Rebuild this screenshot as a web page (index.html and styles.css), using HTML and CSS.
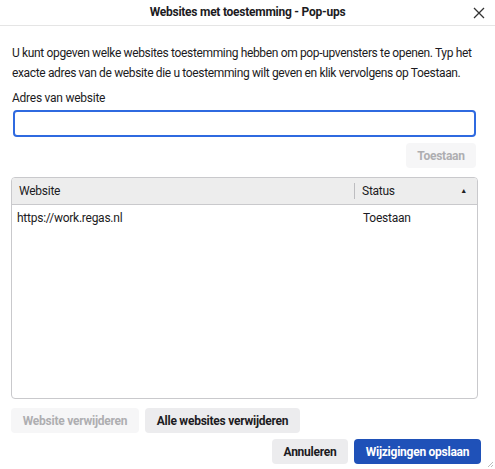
FILE: index.html
```html
<!DOCTYPE html>
<html lang="nl">
<head>
<meta charset="utf-8">
<title>Websites met toestemming - Pop-ups</title>
<link rel="stylesheet" href="styles.css">
</head>
<body>
<div class="dialog">
  <header class="titlebar">
    <span class="title">Websites met toestemming - Pop-ups</span>
    <button class="close" aria-label="Sluiten">
      <svg width="12" height="12" viewBox="0 0 12 12"><path d="M1 1 L11 11 M11 1 L1 11" stroke="#333" stroke-width="1.3" fill="none"/></svg>
    </button>
  </header>
  <main class="content">
    <p class="intro">U kunt opgeven welke websites toestemming hebben om pop-upvensters te openen. Typ het<br>exacte adres van de website die u toestemming wilt geven en klik vervolgens op Toestaan.</p>
    <label class="label" for="url">Adres van website</label>
    <input id="url" class="url-input" type="text">
    <div class="allow-row">
      <button class="btn disabled">Toestaan</button>
    </div>
    <div class="table">
      <div class="thead">
        <div class="th th-site">Website</div>
        <div class="th th-status">Status<span class="sort">&#9650;</span></div>
      </div>
      <div class="tbody">
        <div class="tr">
          <div class="td td-site">https://work.regas.nl</div>
          <div class="td td-status">Toestaan</div>
        </div>
      </div>
    </div>
    <div class="remove-row">
      <button class="btn disabled">Website verwijderen</button>
      <button class="btn">Alle websites verwijderen</button>
    </div>
    <div class="footer">
      <button class="btn">Annuleren</button>
      <button class="btn primary">Wijzigingen opslaan</button>
    </div>
  </main>
  <svg class="grip" width="8" height="8" viewBox="0 0 8 8"><path d="M7 2 L2 7 M7 5 L5 7" stroke="#aaa" stroke-width="0.8"/></svg>
</div>
</body>
</html>
```
FILE: styles.css
```css
* { box-sizing: border-box; }
html, body { margin: 0; padding: 0; background: #fff; }
body {
  font-family: Roboto, "Liberation Sans", Arial, sans-serif;
  font-size: 12px;
  letter-spacing: -0.25px;
  color: #1c1b22;
}
.dialog {
  position: relative;
  width: 495px;
  height: 469px;
  overflow: hidden;
}
.titlebar {
  position: relative;
  height: 26px;
  border-bottom: 1px solid #e5e5e5;
  display: flex;
  align-items: center;
  justify-content: center;
}
.title {
  font-weight: bold;
  font-size: 12px;
  margin-top: -1px;
}
.close {
  position: absolute;
  right: 9px;
  top: 6px;
  width: 14px;
  height: 14px;
  padding: 0;
  border: 0;
  background: none;
  display: flex;
  align-items: center;
  justify-content: center;
}
.content {
  padding: 17px 14px 0 11px;
}
.intro {
  margin: 0 0 0 1px;
  line-height: 20px;
  letter-spacing: -0.35px;
  white-space: nowrap;
}
.label {
  display: block;
  margin: 7px 0 0 1px;
  line-height: 16px;
}
.url-input {
  display: block;
  margin: 4px 0 0 2px;
  width: 463px;
  height: 27px;
  border: 2px solid #2f6ae0;
  border-radius: 4px;
  outline: none;
  font: inherit;
}
.allow-row {
  display: flex;
  justify-content: flex-end;
  margin-top: 6px;
  padding-right: 5px;
}
.btn {
  font-family: inherit;
  font-size: 12px;
  letter-spacing: -0.25px;
  font-weight: bold;
  color: #1c1b22;
  background: #ececee;
  border: 0;
  border-radius: 4px;
  height: 25px;
  padding: 0 12px;
  white-space: nowrap;
}
.btn.disabled {
  background: #f6f6f7;
  color: #aeaeb1;
}
.btn.primary {
  background: #1f51b8;
  color: #fff;
}
.allow-row .btn { width: 70px; padding: 0; }
.table {
  margin-top: 9px;
  width: 467px;
  height: 222px;
  border: 1px solid #c9c9cc;
  border-radius: 4px;
  overflow: hidden;
}
.thead {
  display: flex;
  height: 27px;
  background: #ededed;
  border-bottom: 1px solid #c9c9cc;
  align-items: center;
}
.th { height: 100%; display: flex; align-items: center; }
.th-site {
  width: 343px;
  padding-left: 7px;
  position: relative;
}
.th-site::after {
  content: "";
  position: absolute;
  right: 0;
  top: 5px;
  bottom: 5px;
  width: 1px;
  background: #bdbdc0;
}
.th-status {
  flex: 1;
  padding-left: 7px;
  padding-right: 10px;
  justify-content: space-between;
}
.sort { font-size: 7px; color: #222; }
.tr {
  display: flex;
  height: 26px;
  align-items: center;
}
.td-site { width: 343px; padding-left: 5px; }
.td-status { padding-left: 8px; }
.remove-row {
  display: flex;
  gap: 6px;
  margin-top: 9px;
}
.remove-row .btn:first-child { width: 128px; padding: 0; }
.remove-row .btn:last-child { width: 155px; padding: 0; }
.footer {
  display: flex;
  justify-content: flex-end;
  gap: 6px;
  margin-top: 6px;
  margin-right: 0;
}
.footer .btn:first-child { width: 76px; padding: 0; }
.footer .btn:last-child { width: 127px; padding: 0; }
.grip {
  position: absolute;
  right: 1px;
  bottom: 1px;
}
```
